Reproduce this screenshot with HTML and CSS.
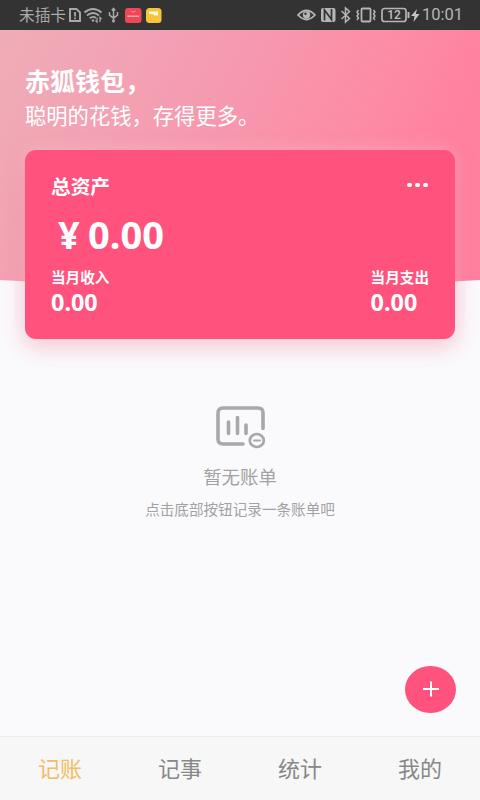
FILE: index.html
```html
<!DOCTYPE html>
<html lang="zh-CN">
<head>
<meta charset="utf-8">
<title>赤狐钱包</title>
<link rel="stylesheet" href="styles.css">
</head>
<body>
<div class="app">
  <header class="status">
    <span class="carrier">未插卡</span>
    <svg class="status-left" width="98" height="30" viewBox="0 0 98 30" fill="none" stroke="#a9a9a9" stroke-width="1.500">
      <path d="M3 9h6.500l3.500 3.500v8.500h-10z" stroke-width="1.900"/><path d="M8 12v4.500M8 17.500v1.800" stroke-width="1.800"/>
      <path d="M17.500 12.500q8.500-7 17 0M20 15.500q6-5 12 0M22.700 18.200q3.300-2.500 6.200-.3" stroke-width="1.900"/><circle cx="26" cy="20.500" r="1.200" fill="#a9a9a9" stroke="none"/><path d="M30 17.500v4.500l-1.500-1.500M33 22v-4.500l1.500 1.500" stroke-width="1.200"/>
      <path d="M46.500 9v12M42.500 12v3.200l4 3 4-3V12M44.800 10.500l1.700-2 1.700 2" stroke-width="1.500"/><circle cx="46.500" cy="21" r="1.500" fill="#a9a9a9" stroke="none"/>
      <rect x="58" y="8" width="16.500" height="15" rx="3" fill="#ef4755" stroke="none"/><path d="M64 11q2.300 2.500 4.600 0" stroke="#ffadb4" stroke-width=".8"/><path d="M60.500 16.300h11.500" stroke="#ffb5bb" stroke-width="1.400" stroke-dasharray="1.400 .3"/>
      <rect x="79" y="8" width="15.500" height="15" rx="3.500" fill="#f6c43d" stroke="none"/><path d="M82 11.500h9v4h-3.500l-2-1.500H82z" fill="#fff9df" stroke="none"/>
    </svg>
    <svg class="status-right" width="126" height="30" viewBox="0 0 126 30" fill="none" stroke="#b5b5b5" stroke-width="1.500">
      <path d="M1 15q8.500-9 17 0-8.500 9-17 0z" stroke-width="1.800"/><circle cx="9.500" cy="15" r="3.700" fill="#b5b5b5" stroke="none"/><circle cx="8.500" cy="13.800" r="1.200" fill="#333" stroke="none"/>
      <rect x="24" y="8" width="14.500" height="14" rx="2" fill="#b5b5b5" stroke="none"/><path d="M27.500 20.500V10l7 9.500V9" stroke="#333" stroke-width="1.700"/>
      <path d="M44.500 11l8 7.500-4 3.500V8l4 3.500-8 7.500" stroke-width="1.500"/>
      <rect x="64.500" y="8.500" width="9" height="13" rx="1" stroke-width="1.800"/><path d="M61.500 10l-1.500 2 1.500 2-1.500 2 1.500 2-1.500 2M76.500 10l1.500 2-1.500 2 1.500 2-1.500 2 1.500 2"/>
      <rect x="85" y="8.500" width="24" height="13" rx="2.500" stroke-width="1.700"/><path d="M111.500 12v6" stroke-width="2"/>
      <text x="97" y="19.100" text-anchor="middle" class="battery">12</text>
      <path d="M120 9l-6 7h3.500l-1 6 6-8h-3.700z" fill="#c5c5c5" stroke="none"/>
    </svg>
    <span class="clock">10:01</span>
  </header>
  <main class="content">
    <svg class="backdrop" width="480" height="258" viewBox="0 0 480 258">
      <defs>
        <linearGradient id="pink" x1="0" y1="0" x2="1" y2=".28"><stop offset="0" stop-color="#efadb8"/><stop offset=".45" stop-color="#f59bb0"/><stop offset=".8" stop-color="#fd8ba5"/><stop offset="1" stop-color="#ff809f"/></linearGradient>
      </defs>
      <path d="M0 0H480V250Q240 265 0 250Z" fill="url(#pink)"/>
    </svg>
    <section class="greeting">
      <h1>赤狐钱包，</h1>
      <p>聪明的花钱，存得更多。</p>
    </section>
    <section class="card">
      <div class="card-head"><h2>总资产</h2><span class="more"><i></i><i></i><i></i></span></div>
      <div class="total"><span class="currency">¥</span><span>0.00</span></div>
      <div class="summary">
        <div><div class="label">当月收入</div><div class="amount">0.00</div></div>
        <div><div class="label">当月支出</div><div class="amount">0.00</div></div>
      </div>
    </section>
    <section class="empty">
      <svg width="52" height="44" viewBox="0 0 52 44" fill="none" stroke="#a8a8a8" stroke-linecap="round">
        <path d="M29 39H9q-5 0-5-5V8q0-5 5-5h35q5 0 5 5v15.500" stroke-width="3.600"/>
        <path d="M14.500 17v11.500M23.500 12.500v16M32 20v8.500" stroke-width="3.600"/>
        <ellipse cx="42.800" cy="35.500" rx="7" ry="6.500" stroke-width="2.700"/><path d="M40 35.500h6" stroke-width="2"/>
      </svg>
      <h3>暂无账单</h3>
      <p>点击底部按钮记录一条账单吧</p>
    </section>
    <button class="add" aria-label="添加"><svg width="16" height="16" viewBox="0 0 16 16"><path d="M0 8H16M8 .5V15.500" stroke="#fff" stroke-width="2"/></svg></button>
  </main>
  <nav class="tabs"><a class="active">记账</a><a>记事</a><a>统计</a><a>我的</a></nav>
</div>
</body>
</html>
```

FILE: styles.css
```css
* { box-sizing: border-box; margin: 0; padding: 0; }
body { font-family: "Noto Sans", "Noto Sans CJK SC", sans-serif; background: #fafafc; }
.app { width: 480px; height: 800px; display: flex; flex-direction: column; overflow: hidden; }
.status { height: 30px; flex: none; display: flex; align-items: center; background: #333; color: #aaa; padding-left: 19px; }
.carrier { width: 47px; font-size: 15.7px; line-height: 32px; white-space: nowrap; }
.status-left { margin-left: 1px; }
.status-right { margin-left: 132px; }
.battery { font: 500 12px Roboto, sans-serif; fill: #c0c0c0; stroke: none; }
.clock { font: 16.5px/32px Roboto, sans-serif; color: #b5b5b5; margin-left: -1px; }
.content { position: relative; flex: 1; min-height: 0; padding: 38px 25px 0; }
.backdrop { position: absolute; left: 0; top: 0; }
.greeting { position: relative; height: 82px; color: #fff; white-space: nowrap; }
.greeting h1 { font-size: 25px; line-height: 27px; height: 30px; }
.greeting p { font-size: 21.3px; line-height: 35px; }
.card { position: relative; height: 188.5px; padding: 22px 26px 0 26px; border-radius: 11px; background: #ff527d; color: #fff; box-shadow: 0 8px 24px rgba(238, 80, 115, .28), 0 0 18px rgba(255, 220, 230, .45); }
.card-head { display: flex; justify-content: space-between; align-items: center; height: 28px; }
.card-head h2 { font-size: 19.7px; line-height: 28px; padding-top: 1px; }
.more { display: flex; gap: 3.3px; margin: -2px 1px 0 0; }
.more i { width: 4.7px; height: 4.7px; border-radius: 50%; background: #fff; }
.total { display: flex; height: 66px; line-height: 68px; font-size: 38px; font-weight: 700; }
.currency { width: 37px; padding-left: 7px; }
.summary { display: flex; justify-content: space-between; }
.label { height: 22px; font-size: 14.6px; line-height: 22px; font-weight: 700; }
.amount { font-size: 23.4px; line-height: 28px; font-weight: 700; }
.empty { display: flex; flex-direction: column; align-items: center; padding-top: 66px; color: #a2a2a2; }
.empty h3 { font-size: 18.4px; font-weight: 400; line-height: 28px; margin-top: 14px; }
.empty p { font-size: 14.6px; line-height: 22px; margin-top: 7px; }
.add { position: absolute; left: 405px; top: 635.5px; width: 51px; height: 47.5px; border: 0; border-radius: 50%; background: #ff527d; display: flex; align-items: center; justify-content: center; }
.tabs { flex: none; height: 64px; display: flex; border-top: 1px solid #ebebed; background: #f7f7f7; color: #888; font-size: 22px; line-height: 62px; }
.tabs a { flex: 1; text-align: center; }
.tabs .active { color: #f4bc62; }
```
